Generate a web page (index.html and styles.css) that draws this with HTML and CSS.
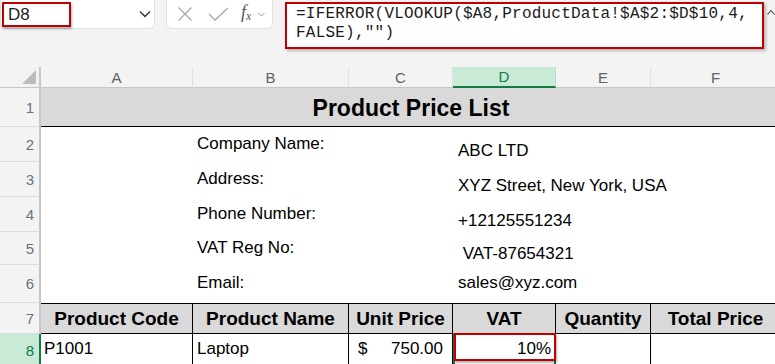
FILE: index.html
```html
<!DOCTYPE html>
<html lang="en">
<head>
    <meta charset="UTF-8">
    <title>Product Price List</title>
    <link rel="stylesheet" href="styles.css">
</head>
<body>
    <div class="topbar">
        <div class="namebox">
            <span class="cellref">D8</span>
            <svg class="chev" width="12" height="8" viewBox="0 0 12 8"><polyline points="1,1.5 6,6.5 11,1.5" fill="none" stroke="#333" stroke-width="1.4"/></svg>
        </div>
        <div class="fxbox">
            <svg class="ico-x" width="16" height="16" viewBox="0 0 16 16"><path d="M1.5 1.5 L14.5 14.5 M14.5 1.5 L1.5 14.5" stroke="#a8a8a8" stroke-width="1.3" fill="none"/></svg>
            <svg class="ico-ok" width="21" height="14" viewBox="0 0 21 14"><polyline points="1,7 7,13 20,1" fill="none" stroke="#a8a8a8" stroke-width="1.3"/></svg>
            <span class="fx"><i>f</i><sub>x</sub></span>
            <svg class="ico-dd" width="7" height="5" viewBox="0 0 7 5"><polyline points="0.5,1 3.5,4 6.5,1" fill="none" stroke="#9a9a9a" stroke-width="1"/></svg>
        </div>
        <div class="formula">=IFERROR(VLOOKUP($A8,ProductData!$A$2:$D$10,4,<br>FALSE),"")</div>
        <svg class="collapse" width="8" height="6" viewBox="0 0 8 6"><polyline points="0.5,5.5 4,1.5 7.5,5.5" fill="none" stroke="#444" stroke-width="1.1"/></svg>
    </div>

    <div class="sheet">
        <!-- column headers -->
        <div class="corner">
            <svg class="tri" width="14" height="14" viewBox="0 0 14 14"><polygon points="14,0 14,14 0,14" fill="#bdbdbd"/></svg>
        </div>
        <div class="col">A</div>
        <div class="col">B</div>
        <div class="col">C</div>
        <div class="col on">D</div>
        <div class="col">E</div>
        <div class="col">F</div>

        <div class="rh">1</div>
        <div class="title">Product Price List</div>

        <div class="rh">2</div>
        <div class="label">Company Name:</div>
        <div class="value">ABC LTD</div>

        <div class="rh">3</div>
        <div class="label">Address:</div>
        <div class="value">XYZ Street, New York, USA</div>

        <div class="rh">4</div>
        <div class="label">Phone Number:</div>
        <div class="value">+12125551234</div>

        <div class="rh">5</div>
        <div class="label">VAT Reg No:</div>
        <div class="value">&nbsp;VAT-87654321</div>

        <div class="rh">6</div>
        <div class="label">Email:</div>
        <div class="value mid">sales@xyz.com</div>

        <div class="rh">7</div>
        <div class="th">Product Code</div>
        <div class="th">Product Name</div>
        <div class="th">Unit Price</div>
        <div class="th">VAT</div>
        <div class="th">Quantity</div>
        <div class="th">Total Price</div>

        <div class="rh on">8</div>
        <div class="td code">P1001</div>
        <div class="td">Laptop</div>
        <div class="td price"><span>$</span><span>750.00</span></div>
        <div class="td pct">10%<span class="sel"></span><span class="mark"></span></div>
        <div class="td"></div>
        <div class="td"></div>
    </div>
</body>
</html>
```

FILE: styles.css
```css
* {
    margin: 0;
    padding: 0;
    box-sizing: border-box;
}
body {
    width: 775px;
    height: 364px;
    overflow: hidden;
    background: #f3f3f3;
    font-family: "Liberation Sans", Arial, sans-serif;
    color: #000;
}

/* formula bar */
.topbar {
    display: flex;
    align-items: flex-start;
    height: 55px;
}
.namebox {
    width: 155px;
    height: 29px;
    background: #fff;
    border: 1px solid #e2e2e2;
    border-top: none;
    border-radius: 0 0 6px 6px;
    display: flex;
    align-items: center;
}
.cellref {
    margin-left: 1px;
    width: 69px;
    height: 25px;
    border: 2px solid #c00000;
    box-shadow: 1px 2px 2px rgba(0, 0, 0, .3);
    padding-left: 4px;
    font-size: 17px;
    line-height: 21px;
    color: #1f1f1f;
}
.chev {
    margin-left: auto;
    margin-right: 3px;
}
.fxbox {
    margin-left: 11px;
    width: 107px;
    height: 29px;
    background: #fff;
    border: 1px solid #e2e2e2;
    border-top: none;
    border-radius: 0 0 6px 6px;
    display: flex;
    align-items: center;
}
.ico-x {
    margin-left: 10px;
}
.ico-ok {
    margin-left: 15px;
}
.fx {
    margin-left: 12px;
    font-family: "Liberation Serif", serif;
    font-size: 18px;
    color: #555;
    line-height: 18px;
}
.fx sub {
    font-size: 12px;
    font-style: italic;
    vertical-align: -2px;
}
.ico-dd {
    margin-left: 7px;
}
.formula {
    margin-left: 12px;
    margin-top: 2px;
    width: 479px;
    height: 47px;
    background: #fff;
    border: 2px solid #c00000;
    box-shadow: 2px 2px 3px rgba(0, 0, 0, .25);
    padding: 1px 0 0 9px;
    font-family: "Liberation Mono", monospace;
    font-size: 16px;
    letter-spacing: 0.22px;
    line-height: 19px;
    color: #1b1b1b;
    white-space: nowrap;
}
.collapse {
    margin-left: 3px;
    margin-top: 9px;
}

/* sheet */
.sheet {
    margin-top: 12px;
    background: #fff;
    display: grid;
    grid-template-columns: 41px 152px 156px 104px 103px 95px 130px;
    grid-template-rows: 21px 39px 35px 35px 35px 33px 38px 31px 34px;
}
.corner {
    position: relative;
    background: #f3f3f3;
    border-right: 2px solid #c6c6c6;
    border-bottom: 1px solid #c6c6c6;
}
.tri {
    position: absolute;
    right: 3px;
    bottom: 3px;
}
.col {
    background: #f3f3f3;
    border-right: 1px solid #e0e0e0;
    border-bottom: 1px solid #c6c6c6;
    display: flex;
    align-items: center;
    justify-content: center;
    font-size: 15px;
    color: #5e6166;
}
.col.on {
    background: #caead8;
    color: #107c41;
    border-right-color: #b5dcc4;
    border-bottom: 2px solid #107c41;
}
.rh {
    background: #f3f3f3;
    border-right: 2px solid #c6c6c6;
    border-bottom: 1px solid #dcdcdc;
    display: flex;
    align-items: center;
    justify-content: flex-end;
    padding-right: 5px;
    font-size: 15px;
    color: #66727f;
}
.rh.on {
    background: #caead8;
    color: #107c41;
    border-right-color: #107c41;
}
.title {
    grid-column: 2 / 8;
    background: #d9d9d9;
    border-bottom: 1px solid #000;
    display: flex;
    align-items: center;
    justify-content: center;
    padding-top: 3px;
    font-size: 23px;
    font-weight: bold;
}
.label {
    grid-column: 3 / 5;
    display: flex;
    align-items: center;
    padding: 0 0 2px 4px;
    font-size: 17px;
}
.value {
    grid-column: 5 / 8;
    display: flex;
    align-items: flex-end;
    padding: 0 0 1px 5px;
    font-size: 17px;
    white-space: pre;
}
.value.mid {
    align-items: center;
    padding-bottom: 2px;
}
.th {
    background: #d9d9d9;
    border-top: 1px solid #000;
    border-bottom: 1px solid #000;
    border-right: 1px solid #000;
    display: flex;
    align-items: center;
    justify-content: center;
    font-size: 19px;
    font-weight: bold;
    white-space: nowrap;
}
.td {
    border-right: 1px solid #000;
    display: flex;
    align-items: center;
    padding: 0 4px 5px 4px;
    font-size: 17px;
}
.td.code {
    padding-left: 3px;
}
.td.price {
    justify-content: space-between;
    padding: 0 9px 5px 9px;
}
.td.pct {
    position: relative;
    justify-content: flex-end;
    padding-right: 4px;
}
.sel {
    position: absolute;
    top: -1px;
    left: 0;
    right: -1px;
    bottom: 0;
    border: 2px solid #107c41;
}
.mark {
    position: absolute;
    top: -1px;
    left: 1px;
    right: -1px;
    bottom: 7px;
    border: 2px solid #c00000;
    box-shadow: 1px 2px 2px rgba(0, 0, 0, .3);
}
```
